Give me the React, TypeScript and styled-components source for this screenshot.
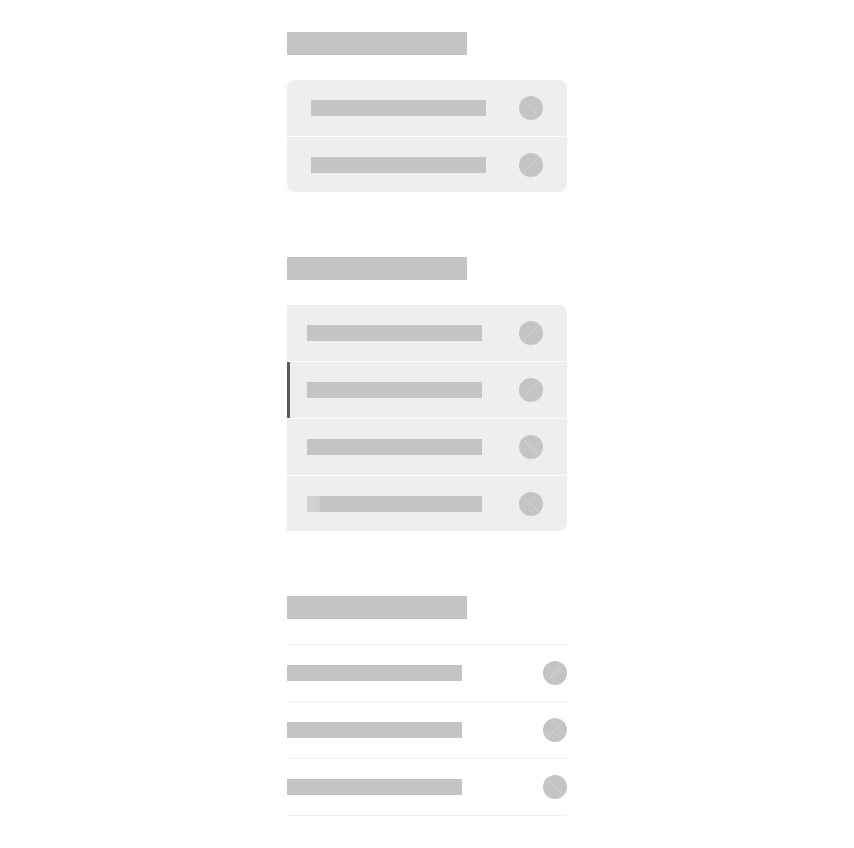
import styled, { createGlobalStyle } from 'styled-components';

const GlobalStyle = createGlobalStyle`
	html, body {
		margin: 0;
		padding: 0;
		background: #ffffff;
		font-family: 'Liberation Sans', Arial, sans-serif;
	}
`;

const Page = styled.div`
	width: 280px;
	margin: 0 auto;
	padding: 32px 0 40px;
	display: flex;
	flex-direction: column;
	gap: 65px;
`;

const Section = styled.section`
	display: flex;
	flex-direction: column;
	gap: 25px;
`;

const Heading = styled.div`
	width: 180px;
	height: 23px;
	background: #c4c4c4;
`;

const Card = styled.div<{ $flatLeft?: boolean }>`
	background: #efeeec;
	border-radius: ${({ $flatLeft }) => ($flatLeft ? '0 8px 8px 0' : '8px')};
	overflow: hidden;
`;

const Row = styled.div<{ $indent: number; $active?: boolean }>`
	position: relative;
	height: 56px;
	display: flex;
	align-items: center;
	padding: 0 24px 0 ${({ $indent }) => $indent}px;
	& + & {
		border-top: 1px solid #ffffff;
	}
	&:last-child:not(:first-child) {
		height: 55px;
	}
	${({ $active }) =>
		$active &&
		`
		&::before {
			content: '';
			position: absolute;
			left: 0;
			top: 0;
			bottom: 0;
			width: 3px;
			background: #5a5a5a;
		}
	`}
`;

const Bar = styled.div<{ $fade?: boolean }>`
	width: 175px;
	height: 16px;
	background: ${({ $fade }) =>
		$fade ? 'linear-gradient(90deg, #d4d4d4 0, #cfcfcf 12px, #c4c4c4 13px)' : '#c4c4c4'};
`;

const List = styled.div`
	border-top: 1px solid #eeeeee;
`;

const ListRow = styled.div`
	height: 56px;
	display: flex;
	align-items: center;
	border-bottom: 1px solid #eeeeee;
`;

const DotWrap = styled.span`
	margin-left: auto;
	display: flex;
`;

const Dot = ({ flip }: { flip?: boolean }) => (
	<DotWrap>
		<svg width='24' height='24' viewBox='0 0 24 24'>
			<circle cx='12' cy='12' r='12' fill='#c4c4c4' />
			<line
				x1={flip ? 5 : 19}
				y1='5'
				x2={flip ? 19 : 5}
				y2='19'
				stroke='#d2d2d2'
				strokeWidth='1'
			/>
		</svg>
	</DotWrap>
);

export default function App() {
	return (
		<>
			<GlobalStyle />
			<Page>
				<Section>
					<Heading />
					<Card>
						<Row $indent={24}>
							<Bar />
							<Dot flip />
						</Row>
						<Row $indent={24}>
							<Bar />
							<Dot />
						</Row>
					</Card>
				</Section>

				<Section>
					<Heading />
					<Card $flatLeft>
						<Row $indent={20}>
							<Bar />
							<Dot />
						</Row>
						<Row $indent={20} $active>
							<Bar />
							<Dot />
						</Row>
						<Row $indent={20}>
							<Bar />
							<Dot flip />
						</Row>
						<Row $indent={20}>
							<Bar $fade />
							<Dot flip />
						</Row>
					</Card>
				</Section>

				<Section>
					<Heading />
					<List>
						<ListRow>
							<Bar />
							<Dot />
						</ListRow>
						<ListRow>
							<Bar />
							<Dot />
						</ListRow>
						<ListRow>
							<Bar />
							<Dot flip />
						</ListRow>
					</List>
				</Section>
			</Page>
		</>
	);
}
